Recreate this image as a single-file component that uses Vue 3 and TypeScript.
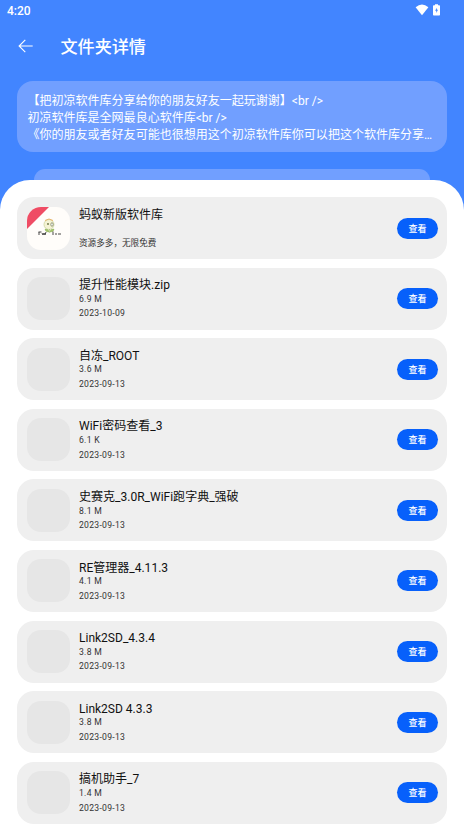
<script setup lang="ts">
interface FileEntry {
  name: string
  size: string
  note: string
  logo?: boolean
}

const files: FileEntry[] = [
  { name: '蚂蚁新版软件库', size: '', note: '资源多多，无限免费', logo: true },
  { name: '提升性能模块.zip', size: '6.9 M', note: '2023-10-09' },
  { name: '自冻_ROOT', size: '3.6 M', note: '2023-09-13' },
  { name: 'WiFi密码查看_3', size: '6.1 K', note: '2023-09-13' },
  { name: '史赛克_3.0R_WiFi跑字典_强破', size: '8.1 M', note: '2023-09-13' },
  { name: 'RE管理器_4.11.3', size: '4.1 M', note: '2023-09-13' },
  { name: 'Link2SD_4.3.4', size: '3.8 M', note: '2023-09-13' },
  { name: 'Link2SD 4.3.3', size: '3.8 M', note: '2023-09-13' },
  { name: '搞机助手_7', size: '1.4 M', note: '2023-09-13' },
]

const description: string[] = [
  '【把初凉软件库分享给你的朋友好友一起玩谢谢】<br />',
  '初凉软件库是全网最良心软件库<br />',
  '《你的朋友或者好友可能也很想用这个初凉软件库你可以把这个软件库分享…',
]
</script>

<template>
  <div class="screen">
    <div class="status">
      <span class="time">4:20</span>
      <div class="status-icons">
        <svg width="14" height="12" viewBox="0 0 14 12"><path d="M.6 3.2Q7-2 13.4 3.2L7 11.3Z" fill="#fff" /></svg>
        <svg width="7" height="12" viewBox="0 0 7 12">
          <path d="M2 .3h3v1h1.2q.8 0 .8.8v8.6q0 .8-.8.8H.8q-.8 0-.8-.8V2.100q0-.8.8-.8H2Z" fill="#fff" />
          <path d="M3.900 3.700 2.100 6.700h1.200v2.300l1.700-3.200H3.900Z" fill="#4285ff" />
        </svg>
      </div>
    </div>
    <header class="bar">
      <svg class="back" width="16" height="14" viewBox="0 0 16 14" fill="none" stroke="#fff" stroke-width="1.1">
        <path d="M7.300.8 1.100 7l6.200 6.200M1.300 7h13.400" />
      </svg>
      <h1>文件夹详情</h1>
    </header>
    <section class="intro">
      <p v-for="line in description" :key="line">{{ line }}</p>
    </section>
    <div class="peek"></div>
    <main class="sheet">
      <article v-for="file in files" :key="file.name" class="card">
        <div class="thumb" :class="{ filled: file.logo }">
          <svg v-if="file.logo" width="43" height="43" viewBox="0 0 43 43">
            <path d="M0 0h22L0 22Z" fill="#ef4c64" />
            <ellipse cx="22" cy="17.500" rx="5" ry="5" fill="#f5f3d4" stroke="#cdd6a0" stroke-width=".8" />
            <path d="M18 13.500q4-3 8 0" fill="none" stroke="#e7b46c" />
            <circle cx="21" cy="17" r=".9" fill="#68713f" />
            <ellipse cx="25" cy="17.500" rx="1.200" ry="1.800" fill="#fff" stroke="#6d7550" stroke-width=".7" />
            <path d="M22.500 22v4M22 25q-4 0-4-3 4 0 4 3M23 25q4 0 4-3-4 0-4 3" fill="#a5c86a" stroke="#8cae56" stroke-width=".5" />
            <path d="M11.500 25h3m-2.500 0v3m3-2 1 2 1-2 1 2 1-3m7-.5v3.500m2-1h2m1 0h3" fill="none" stroke="#333" stroke-width=".9" />
          </svg>
        </div>
        <div class="info">
          <div class="name">{{ file.name }}</div>
          <div class="size">{{ file.size }}</div>
          <div class="note" :class="{ chinese: file.logo }">{{ file.note }}</div>
        </div>
        <button type="button" class="view">查看</button>
      </article>
    </main>
  </div>
</template>

<style>
body {
  overflow: hidden;
}
</style>

<style scoped>
.screen {
  display: flex;
  flex-direction: column;
  box-sizing: border-box;
  height: 826px;
  overflow: hidden;
  background: #4285ff;
  color: #fff;
  font-family: Roboto, "Noto Sans CJK SC", sans-serif;
}
.status {
  display: flex;
  flex: none;
  justify-content: space-between;
  height: 20px;
  padding: 0 24px 0 7px;
}
.time {
  font-size: 12px;
  font-weight: 500;
  line-height: 22px;
}
.status-icons {
  display: flex;
  gap: 4px;
  padding-top: 3.500px;
}
.bar {
  display: flex;
  flex: none;
  align-items: center;
  height: 52px;
  padding-left: 18px;
}
h1 {
  margin: 2px 0 0 26.500px;
  font-size: 17.100px;
  font-weight: 500;
  line-height: 24px;
}
.intro {
  flex: none;
  box-sizing: border-box;
  height: 71px;
  margin: 9px 17px 0;
  padding: 11.500px 10.500px 0;
  border-radius: 16px;
  background: #719fff;
}
.intro p {
  margin: 0;
  font-size: 12.030px;
  line-height: 17.200px;
  white-space: nowrap;
}
.peek {
  flex: none;
  height: 11px;
  margin: 17px 34px 0;
  border-radius: 16px 16px 0 0;
  background: #719fff;
}
.sheet {
  display: flex;
  flex: 1;
  flex-direction: column;
  gap: 8.600px;
  box-sizing: border-box;
  min-height: 0;
  padding: 17px 17px 0;
  border-radius: 30px 30px 0 0;
  background: #fff;
}
.card {
  display: flex;
  flex: none;
  align-items: center;
  box-sizing: border-box;
  height: 62px;
  padding: 0 9px 0 9.500px;
  border-radius: 17px;
  background: #efefef;
  color: #111;
}
.thumb {
  flex: none;
  width: 43px;
  height: 43px;
  overflow: hidden;
  border-radius: 14px;
  background: #e6e6e6;
}
.thumb svg {
  display: block;
}
.filled {
  background: #fffdfa;
}
.info {
  flex: 1;
  align-self: stretch;
  padding: 9.600px 0 0 9.500px;
}
.name {
  font-size: 12.030px;
  line-height: 17px;
  white-space: nowrap;
}
.size,
.note {
  height: 12px;
  color: #333;
  font-size: 8.600px;
  line-height: 12px;
  letter-spacing: 0.27px;
}
.size {
  margin-top: -1.300px;
}
.note {
  margin-top: 2.600px;
}
.chinese {
  letter-spacing: 0;
}
.view {
  flex: none;
  width: 41px;
  height: 21px;
  padding: 0;
  border: 0;
  border-radius: 11px;
  background: #0760fb;
  color: #fff;
  font: 500 9px/22px Roboto, "Noto Sans CJK SC", sans-serif;
}
</style>
